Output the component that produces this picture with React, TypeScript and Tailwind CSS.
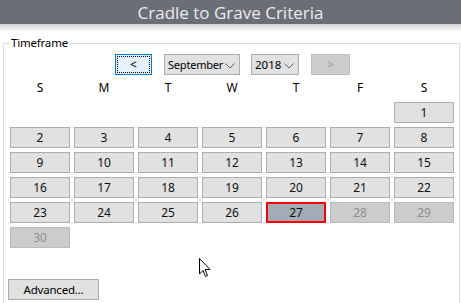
import React from "react";

const rows: (number | null)[][] = [
  [null, null, null, null, null, null, 1],
  [2, 3, 4, 5, 6, 7, 8],
  [9, 10, 11, 12, 13, 14, 15],
  [16, 17, 18, 19, 20, 21, 22],
  [23, 24, 25, 26, 27, 28, 29],
  [30, null, null, null, null, null, null],
];

function Cell({ d }: { d: number | null }) {
  if (d === null) return <div className="h-[21px]" />;
  if (d === 27)
    return (
      <div className="h-[21px] border-2 border-[#ff0000] bg-[#a1acb7] flex items-center justify-center text-[#111] leading-none">
        {d}
      </div>
    );
  if (d >= 28)
    return (
      <div className="h-[21px] border border-[#bcbcbc] bg-[#cccccc] flex items-center justify-center text-[#8d8d8d] leading-none">
        {d}
      </div>
    );
  return (
    <div className="h-[21px] border border-[#adadad] bg-[#e1e1e1] flex items-center justify-center text-[#111] leading-none">
      {d}
    </div>
  );
}

const Chevron = () => (
  <svg width="10" height="6" viewBox="0 0 10 6" className="mt-[3px] shrink-0">
    <path d="M0.5 0.5 L5 5 L9.5 0.5" fill="none" stroke="#606060" strokeWidth="1" />
  </svg>
);

export default function App() {
  return (
    <div className="w-[461px] h-[303px] bg-white relative overflow-hidden font-['Segoe_UI','Noto_Sans',sans-serif] text-[12px] text-black">
      <div className="h-[24px] bg-[#6b6e76] flex items-center justify-center text-[#ececec] text-[17px] leading-none font-['Open_Sans',sans-serif]">
        Cradle to Grave Criteria
      </div>
      <div className="h-[8px] bg-gradient-to-b from-[#d0d1d3] to-white" />
      <div className="relative mt-[11px] ml-[3px] mr-[1px] h-[270px] border border-[#dcdcdc] border-b-0">
        <div className="absolute -top-[8px] left-[5px] bg-white px-[2px] leading-[14px] text-[11.5px] tracking-[-0.2px]">
          Timeframe
        </div>
        <div className="flex items-center pt-[10px] pl-[111px] h-[31px]">
          <div className="w-[37px] h-[21px] border border-[#0078d7] bg-[#e5f1fb] p-[1px]">
            <div className="w-full h-full border border-dotted border-black flex items-center justify-center leading-none">
              &lt;
            </div>
          </div>
          <div className="ml-[12px] w-[76px] h-[21px] border border-[#adadad] bg-[#e1e1e1] flex items-center justify-between pl-[3px] pr-[4px] leading-none text-[11px] tracking-[-0.2px]">
            <span>September</span>
            <Chevron />
          </div>
          <div className="ml-[11px] w-[48px] h-[21px] border border-[#adadad] bg-[#e1e1e1] flex items-center justify-between pl-[3px] pr-[4px] leading-none text-[11.5px]">
            <span>2018</span>
            <Chevron />
          </div>
          <div className="ml-[12px] w-[39px] h-[21px] border border-[#bfbfbf] bg-[#cccccc] flex items-center justify-center text-[#999] leading-none">
            &gt;
          </div>
        </div>
        <div className="pl-[6px] w-[451px]">
          <div className="grid grid-cols-[repeat(7,60px)] gap-x-[4px] h-[27px] items-center pb-[2px]">
            {["S", "M", "T", "W", "T", "F", "S"].map((d, i) => (
              <div key={i} className="text-center leading-none">
                {d}
              </div>
            ))}
          </div>
          <div className="grid grid-cols-[repeat(7,60px)] gap-x-[4px] gap-y-[4px]">
            {rows.flat().map((d, i) => (
              <Cell key={i} d={d} />
            ))}
          </div>
        </div>
        <div className="mt-[31px] ml-[4px] w-[91px] h-[21px] border border-[#adadad] bg-[#e1e1e1] flex items-center justify-center leading-none text-[11.5px] tracking-[-0.2px]">
          Advanced...
        </div>
      </div>
      <svg
        className="absolute left-[199px] top-[258px]"
        width="12"
        height="20"
        viewBox="0 0 12 20"
      >
        <path
          d="M0.5 0.5 L0.5 16 L4 12.5 L6.5 18.5 L8.5 17.5 L6 11.5 L11 11.5 Z"
          fill="white"
          stroke="black"
          strokeWidth="1"
          strokeLinejoin="miter"
        />
      </svg>
    </div>
  );
}
